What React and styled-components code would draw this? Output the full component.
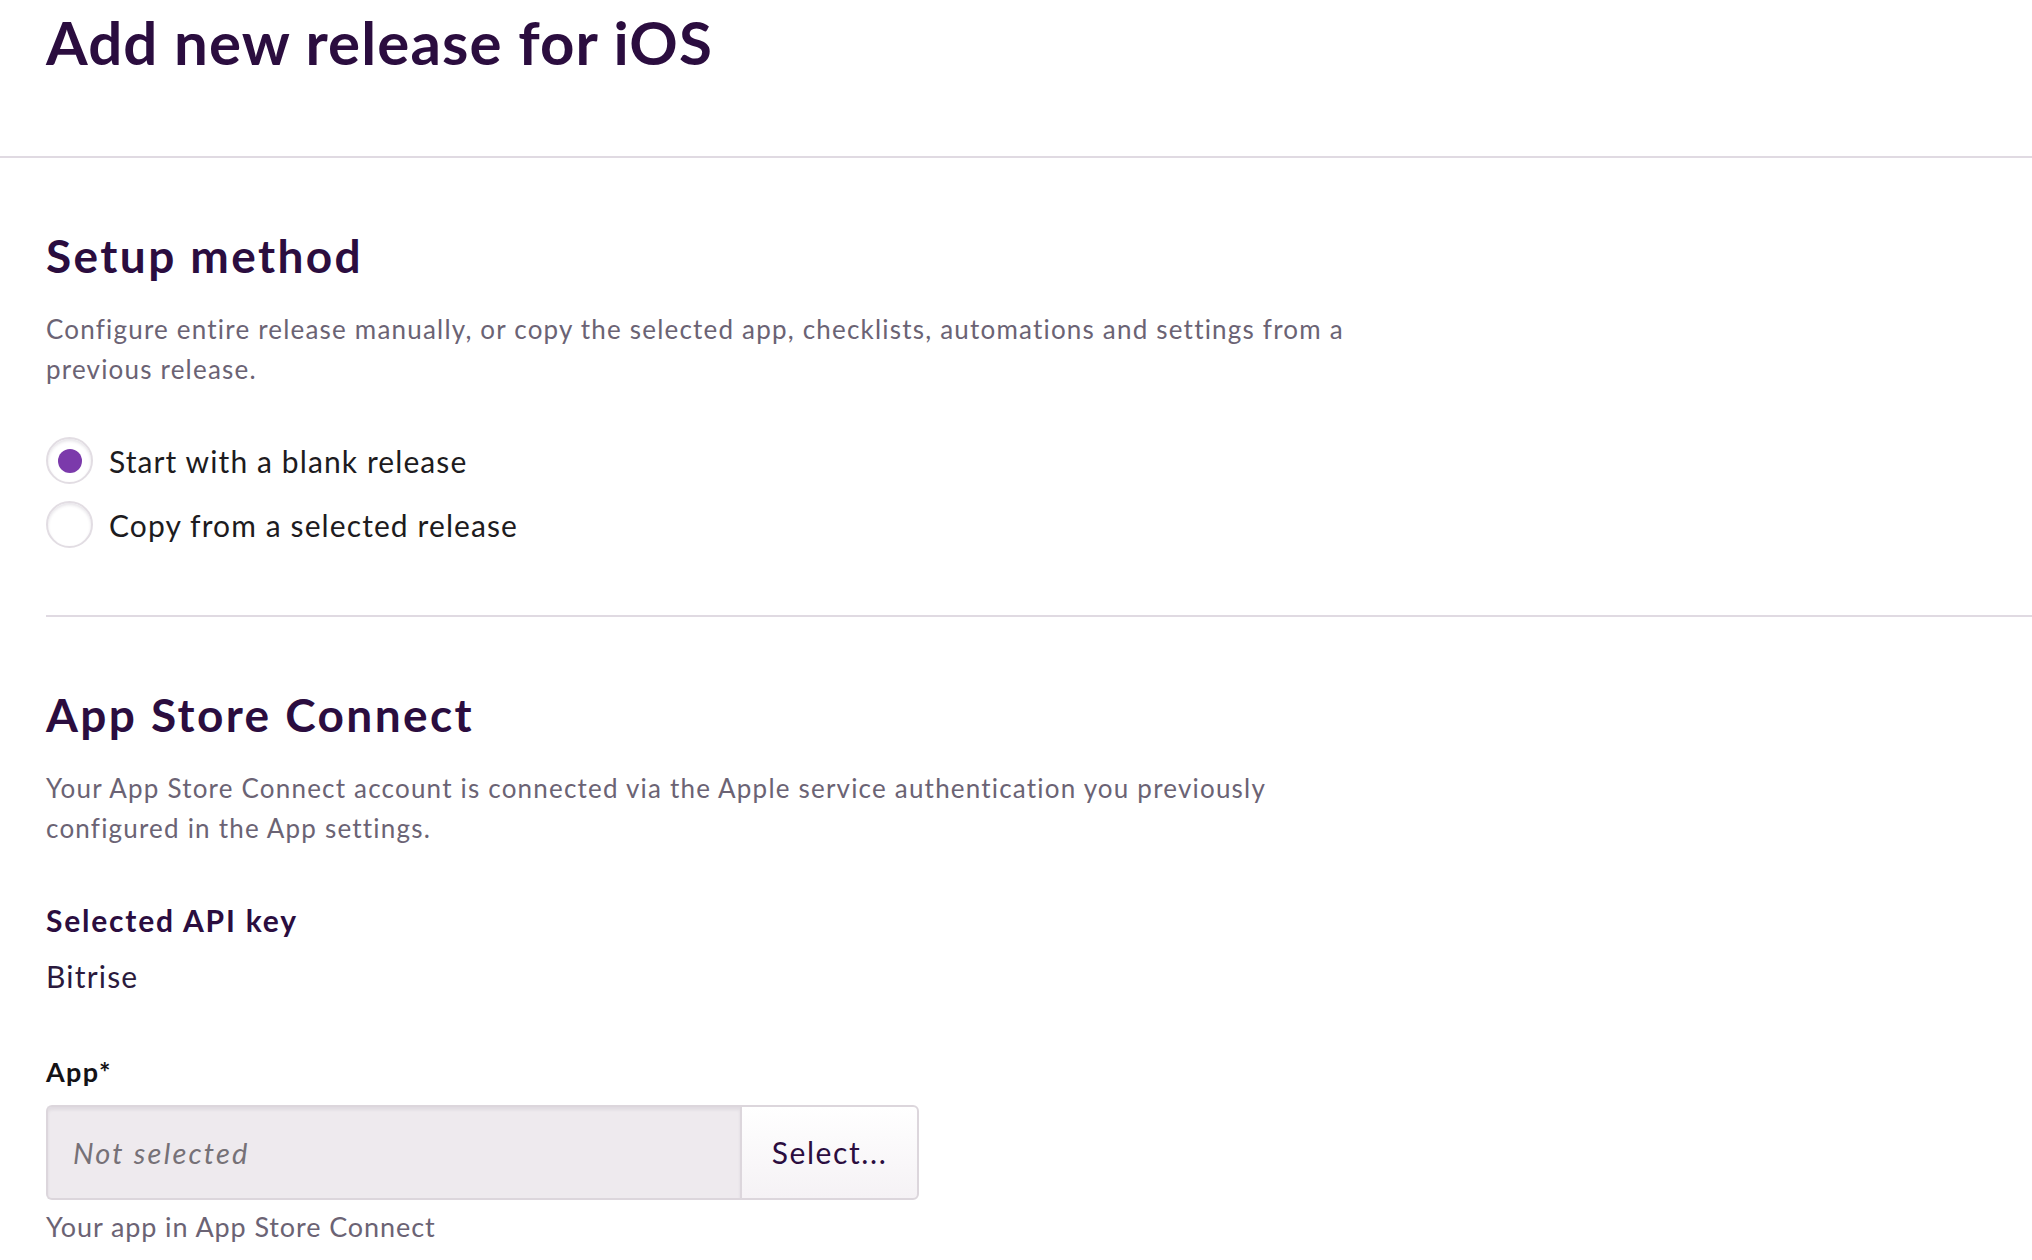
import React from 'react'
import { styled, createGlobalStyle } from 'styled-components'

const GlobalStyle = createGlobalStyle`
  body {
    margin: 0;
    background: #ffffff;
    font-family: Lato, "Noto Sans", sans-serif;
  }
`

const Page = styled.div`
  width: 100%;
`

const Header = styled.header`
  padding: 6px 0 78px 46px;
  border-bottom: 2px solid #e0dae2;
`

const Title = styled.h1`
  margin: 0;
  font-size: 60px;
  line-height: 1.2;
  font-weight: 700;
  letter-spacing: 1.1px;
  color: #2b0d3f;
`

const Body = styled.main`
  padding-left: 46px;
`

const Section = styled.section`
  padding: 70px 0 ${p => p.$bottom || 0}px;
  border-bottom: ${p => (p.$divider ? '2px solid #e0dae2' : 'none')};
`

const Heading = styled.h2`
  margin: 0;
  font-size: 46px;
  line-height: 1.2;
  font-weight: 700;
  letter-spacing: 2.4px;
  color: #2b0d3f;
`

const Description = styled.p`
  margin: 26px 0 0;
  max-width: 1320px;
  font-size: 26px;
  line-height: 40px;
  letter-spacing: 1.2px;
  color: #6b6374;
`

const RadioGroup = styled.div`
  margin-top: 48px;
  display: flex;
  flex-direction: column;
  gap: 17px;
`

const RadioRow = styled.label`
  display: flex;
  align-items: center;
  gap: 16px;
  height: 47px;
  font-size: 30px;
  letter-spacing: 1.1px;
  color: #1d1b20;
  cursor: pointer;
`

const RadioCircle = styled.span`
  width: 47px;
  height: 47px;
  box-sizing: border-box;
  border-radius: 50%;
  border: 2px solid #e2dde3;
  background: #ffffff;
  box-shadow: inset 0 2px 3px rgba(60, 40, 70, 0.12);
  display: flex;
  align-items: center;
  justify-content: center;

  &::after {
    content: '';
    width: 24px;
    height: 24px;
    border-radius: 50%;
    background: #7b3aab;
    display: ${p => (p.$checked ? 'block' : 'none')};
  }
`

const FieldLabel = styled.div`
  margin-top: ${p => p.$top}px;
  font-size: ${p => p.$size || 30}px;
  line-height: 1.2;
  font-weight: 700;
  letter-spacing: ${p => p.$spacing || 1.8}px;
  color: ${p => p.$color || '#2b0d3f'};
`

const FieldValue = styled.div`
  margin-top: 20px;
  font-size: 30px;
  line-height: 1.2;
  letter-spacing: 1.2px;
  color: #2b1a3d;
`

const InputRow = styled.div`
  margin-top: 16px;
  display: flex;
  width: 873px;
  height: 95px;
`

const FakeInput = styled.div`
  flex: 0 0 694px;
  box-sizing: border-box;
  display: flex;
  align-items: center;
  padding-left: 25px;
  background: #eeeaee;
  border: 2px solid #dcd6dc;
  border-right: none;
  border-radius: 6px 0 0 6px;
  box-shadow: inset 0 3px 3px rgba(70, 50, 80, 0.08);
  font-size: 29px;
  font-style: italic;
  letter-spacing: 2.2px;
  color: #767177;
`

const SelectButton = styled.button`
  flex: 1;
  box-sizing: border-box;
  border: 2px solid #dcd6dc;
  border-radius: 0 6px 6px 0;
  background: linear-gradient(#ffffff, #f5f2f5);
  font-family: inherit;
  font-size: 30px;
  letter-spacing: 1.6px;
  color: #2b0d3f;
  cursor: pointer;
`

const Helper = styled.div`
  margin-top: 11px;
  font-size: 27px;
  line-height: 1.2;
  letter-spacing: 0.9px;
  color: #6b6374;
`

export default function App() {
  return (
    <Page>
      <GlobalStyle />
      <Header>
        <Title>Add new release for iOS</Title>
      </Header>
      <Body>
        <Section $divider $bottom={67}>
          <Heading>Setup method</Heading>
          <Description>
            Configure entire release manually, or copy the selected app, checklists, automations and settings from a
            previous release.
          </Description>
          <RadioGroup>
            <RadioRow>
              <RadioCircle $checked />
              Start with a blank release
            </RadioRow>
            <RadioRow>
              <RadioCircle />
              Copy from a selected release
            </RadioRow>
          </RadioGroup>
        </Section>
        <Section>
          <Heading>App Store Connect</Heading>
          <Description>
            Your App Store Connect account is connected via the Apple service authentication you previously
            configured in the App settings.
          </Description>
          <FieldLabel $top={54}>Selected API key</FieldLabel>
          <FieldValue>Bitrise</FieldValue>
          <FieldLabel $top={62} $size={27} $spacing={1.4} $color="#141216">App*</FieldLabel>
          <InputRow>
            <FakeInput>Not selected</FakeInput>
            <SelectButton>Select...</SelectButton>
          </InputRow>
          <Helper>Your app in App Store Connect</Helper>
        </Section>
      </Body>
    </Page>
  )
}
